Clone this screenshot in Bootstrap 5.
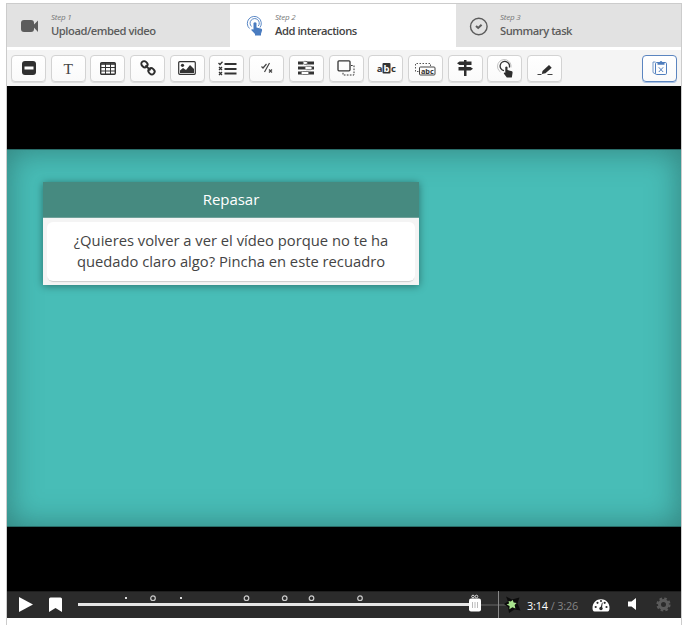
<!DOCTYPE html>
<html lang="en">
<head>
<meta charset="utf-8">
<title>Interactive video editor</title>
<link href="https://cdn.jsdelivr.net/npm/bootstrap@5.3.0/dist/css/bootstrap.min.css" rel="stylesheet">
<style>
body{font-family:"Open Sans",sans-serif;background:#fff;overflow:hidden}
svg{display:block;flex:none;overflow:visible}
.editor{width:676px;height:640px;margin:3px 0 0 6px;border:1px solid #ccc}
.steps{height:46px;background:#fff}
.step{height:43px;background:#e2e2e2;color:#5c5c5c;padding-left:12px;border:0}
.step.w1{width:223px}.step.w2{width:226px}.step.w3{width:225px}
.step.active{background:#fff;color:#444;padding-left:13px}
.step .pic{width:32px}
.step .num{font-size:8px;line-height:10px;font-style:italic;color:#777;letter-spacing:-.2px}
.step .title{font-size:11.2px;line-height:16px;font-weight:600;letter-spacing:-.46px;margin-top:1px;white-space:nowrap}
.tools{height:36px;background:#f4f4f4;padding:0 4px;gap:4.7px}
.tools .btn{width:35px;height:27px;padding:0;border:1px solid #d3d3d3;border-radius:4px;background:linear-gradient(#fff,#fafafa);box-shadow:0 1px 0 #ddd}
.tools .btn.paste{border-color:#5b85c0;box-shadow:0 1px 0 #a9c0e0}
.video{height:505px;background:#000;padding:63px 0 64px}
.scene{height:378px;background:#48bdb7;box-shadow:inset 0 0 30px 2px rgba(35,85,82,.55),inset 0 1px 0 #2c7672,inset 0 -1px 0 #2c7672;padding:33px 0 0 36px}
.task{width:376px;height:103px;background:#f4f4f4;box-shadow:0 1px 8px rgba(0,0,0,.4)}
.task h2{height:36px;line-height:35px;font-size:15px;font-weight:400;color:#fff;background:#468a80;border-bottom:1px solid #6fa19a;margin:0;letter-spacing:-.05px}
.task p{height:59px;margin:4px 4px 0;padding-top:8px;background:#fff;border-radius:6px;box-shadow:0 2px 1px -1px #ccc;font-size:14.75px;line-height:21px;color:#444}
.controls{height:27px;background:#2b2b2b;border-top:1px solid #1e1e1e;color:#fff}
.play{margin-left:12px}
.bookmark{margin-left:16px}
.track{width:434px;height:26px;margin-left:16px}
.clock{width:52px;margin-left:15px;font-size:10.9px;line-height:25px;white-space:nowrap;letter-spacing:-.15px}
.clock span{color:#858585}
.speed{margin-left:13px}
.volume{margin-left:18px}
.gear{margin-left:19px}
</style>
<script src="https://cdn.jsdelivr.net/npm/bootstrap@5.3.0/dist/js/bootstrap.bundle.min.js"></script>
</head>
<body>
<main class="editor">
<nav class="steps d-flex">
 <div class="step w1 d-flex align-items-center">
  <div class="pic"><svg width="22" height="14"><rect x="2" y="1" width="13" height="12" rx="3" fill="#5c5c5c"/><path d="M13.500 7l5.500-5.500v11.500z" fill="#5c5c5c"/></svg></div>
  <div><div class="num">Step 1</div><div class="title">Upload/embed video</div></div>
 </div>
 <div class="step active w2 d-flex align-items-center">
  <div class="pic"><svg width="24" height="22" viewBox="0 .5 24 22" fill="none" stroke="#4a7cc0"><path d="M6.500 14A7 7 0 1 1 17 13" stroke-width=".9"/><path d="M8.500 12A4.600 4.600 0 1 1 15.300 11.500" stroke-width=".9"/><path d="M10.500 8.500q1.500-1.400 3 0v4.500l5 1.200q.8.500.5 2l-1 3V21h-6v-1.500l-3.800-4q0-1.400 2.300-.5z" fill="#4a7cc0" stroke="none"/></svg></div>
  <div><div class="num">Step 2</div><div class="title">Add interactions</div></div>
 </div>
 <div class="step w3 d-flex align-items-center">
  <div class="pic"><svg width="22" height="20" fill="none" stroke="#5c5c5c"><circle cx="10.800" cy="10.500" r="8.300" stroke-width="1.400"/><path d="M8 10l2.200 2 3.400-3.300" stroke-width="2"/></svg></div>
  <div><div class="num">Step 3</div><div class="title">Summary task</div></div>
 </div>
</nav>
<div class="tools d-flex align-items-center">
 <button class="btn d-flex align-items-center justify-content-center" aria-label="Statements"><svg width="16" height="14"><rect x="1" width="14" height="14" rx="3" fill="#303030"/><rect x="3.500" y="5.500" width="9" height="3" fill="#fff"/></svg></button>
 <button class="btn d-flex align-items-center justify-content-center" aria-label="Text"><svg width="16" height="16"><text x="8.200" y="13.500" text-anchor="middle" font-family="Liberation Serif,serif" font-size="15.500" fill="#444">T</text></svg></button>
 <button class="btn d-flex align-items-center justify-content-center" aria-label="Table"><svg width="16" height="13" fill="none" stroke="#333"><rect x=".7" y=".7" width="14.600" height="11.600" rx="1" stroke-width="1.400"/><path d="M1 2h14" stroke-width="1.600"/><path d="M1 5.500h14M1 9h14M5.500 1v11M10.500 1v11"/></svg></button>
 <button class="btn d-flex align-items-center justify-content-center" aria-label="Link"><svg width="16" height="16" fill="none" stroke="#2e2e2e" stroke-width="1.900"><rect x="1.200" y="1.500" width="6.500" height="5.500" rx="2.700" transform="rotate(45 4.500 4.200)"/><rect x="8.300" y="8.500" width="6.500" height="5.500" rx="2.700" transform="rotate(45 11.500 11.200)"/><path d="M5.500 5.300l5 5"/></svg></button>
 <button class="btn d-flex align-items-center justify-content-center" aria-label="Image"><svg width="18" height="14"><rect x=".7" y=".7" width="16.600" height="12.600" rx="1" fill="#fff" stroke="#333" stroke-width="1.200"/><circle cx="4.500" cy="4.300" r="1.600" fill="#333"/><path d="M2 12V9.500L5 7l3 2 4-5 4 4v4z" fill="#333"/></svg></button>
 <button class="btn d-flex align-items-center justify-content-center" aria-label="Summary"><svg width="20" height="14" viewBox="-1 -.5 20 14" fill="none" stroke="#333"><path d="M6.500 2.500h12M6.500 7.500h12M6.500 12h12" stroke-width="2"/><path d="M.5 1.500L2 3 4.500.3M1 5.500l3 3m0-3l-3 3M1 10.500l3 3m0-3l-3 3" stroke-width="1.300"/></svg></button>
 <button class="btn d-flex align-items-center justify-content-center" aria-label="True or false"><svg width="14" height="12" fill="none" stroke="#444"><path d="M1.500 4.500l1.500 1.500 3.500-4M9.500 1l-5 9M9 7.500l3 3m0-3l-3 3" stroke-width="1.200"/></svg></button>
 <button class="btn d-flex align-items-center justify-content-center" aria-label="Drag text"><svg width="18" height="14"><path d="M1 2h5M9 2h8M1 7h7M13 7h4M1 12h4M10 12h7" stroke="#333" stroke-width="2.900"/><g fill="#fff" stroke="#555" stroke-width=".8"><rect x="6" y=".4" width="4.500" height="3" rx="1.500"/><rect x="8" y="5.300" width="7" height="3.400" rx="1.500"/><rect x="4" y="10.500" width="8" height="3" rx="1.500"/></g></svg></button>
 <button class="btn d-flex align-items-center justify-content-center" aria-label="Drag and drop"><svg width="18" height="16" fill="none" stroke="#333"><rect x="1" y=".8" width="12" height="10" rx="1" stroke-width="1.300"/><path d="M14 5.500h3v9.500H6v-3" stroke-dasharray="1.700 1.300"/></svg></button>
 <button class="btn d-flex align-items-center justify-content-center" aria-label="Mark words"><svg width="22" height="14" font-family="Open Sans,sans-serif" font-weight="700" font-size="9.500" fill="#333"><rect x="7.500" y="2" width="8" height="10.500" rx="1"/><text x="1.800" y="10.800">a</text><text x="8.500" y="10.800" fill="#fff">b</text><text x="16" y="10.800">c</text></svg></button>
 <button class="btn d-flex align-items-center justify-content-center" aria-label="Drag the words"><svg width="22" height="14" viewBox="-.5 -1 22 14" fill="none" stroke="#444"><path d="M4 9.500H1v-8h15v3" stroke-dasharray="1.500 1.500" stroke-width=".9"/><rect x="5" y="5" width="15.500" height="8" rx="1"/><text x="12.800" y="11.700" text-anchor="middle" font-family="Open Sans,sans-serif" font-weight="700" font-size="7.300" fill="#333" stroke="none">abc</text></svg></button>
 <button class="btn d-flex align-items-center justify-content-center" aria-label="Crossroads"><svg width="16" height="16" fill="#2e2e2e"><path d="M7 0h2.500v16H7zM2.500 1.500h12v3.600h-12L0 3.300zM1.500 7h12L16 8.800l-2.500 1.800h-12z"/></svg></button>
 <button class="btn d-flex align-items-center justify-content-center" aria-label="Hotspot"><svg width="18" height="18" fill="none" stroke="#333"><path d="M4.500 13A6.800 6.800 0 1 1 15 8.500" stroke-width=".6" stroke="#999"/><path d="M8 11.700A4.700 4.700 0 1 1 13.300 8.500" stroke-width="1.300"/><path d="M9.300 8q1.200-1 2.200 0v3l4.500 1.200q.8.500.5 2L15.800 18.500h-5l-3-4q0-1.500 1.500-.8z" fill="#2e2e2e" stroke="none"/></svg></button>
 <button class="btn d-flex align-items-center justify-content-center" aria-label="Free text question"><svg width="16" height="14" viewBox="-1.500 -1 16 14"><path d="M0 12.500h4M10 12.500h5" stroke="#444" stroke-width="1.200"/><path d="M5 9l6.500-6 2.700 2.700-6.200 5.500-3.700.8z" fill="#2e2e2e"/></svg></button>
 <button class="btn paste ms-auto d-flex align-items-center justify-content-center" aria-label="Paste"><svg width="16" height="17" viewBox="0 .5 16 17" fill="none" stroke="#4f7dbd"><path d="M3.500 2.500H1v10.500l2.500 1.500" stroke-width=".8"/><rect x="3.500" y="3" width="11" height="12" rx="1.200"/><path d="M5.500 5.200V2.800h2q1.500-2.600 3 0h2v2.400z" fill="#4f7dbd" stroke="none"/><path d="M6.800 7.800l4.400 4.700m0-4.700l-4.400 4.700"/></svg></button>
</div>
<section class="video">
 <div class="scene">
  <article class="task text-center"><h2>Repasar</h2><p>¿Quieres volver a ver el vídeo porque no te ha<br>quedado claro algo? Pincha en este recuadro</p></article>
 </div>
</section>
<div class="controls d-flex align-items-center">
 <svg class="play" width="14" height="16"><path d="M0 0v15l14-7.500z" fill="#fff"/></svg>
 <svg class="bookmark" width="13" height="15" viewBox="0 .5 13 15"><path d="M1.500 0h10q1.500 0 1.500 1.500V14.500l-6.500-4L0 14.500V1.500Q0 0 1.500 0z" fill="#fff"/></svg>
 <svg class="track" viewBox="0 0 434 26" fill="none">
  <path d="M396 13h35" stroke="#555" stroke-width="1.500"/><path d="M0 12.500h397" stroke="#e6e6e6" stroke-width="3"/>
  <path d="M420.500-1v27" stroke="#888"/>
  <path d="M47 6h2M102 6h2" stroke="#ddd" stroke-width="1.800"/>
  <g stroke="#ccc" stroke-width="1.200"><circle cx="75" cy="6.200" r="2.300"/><circle cx="168.500" cy="6.200" r="2.300"/><circle cx="206.700" cy="6.200" r="2.300"/><circle cx="233.500" cy="6.200" r="2.300"/><circle cx="282" cy="6.200" r="2.300"/></g>
  <circle cx="395" cy="4.500" r="1.300" stroke="#ddd"/><circle cx="398.500" cy="4.500" r="1.300" stroke="#ddd"/>
  <rect x="391" y="6.500" width="12" height="13" rx="2" fill="#fff"/><path d="M394.500 10v6M397 10v6M399.500 10v6" stroke="#bbb"/>
  <path d="M428 4.500l6 3 7.500-2-2 6 3 7-6-1-5.500 3.500-1-6-4-3 4-2.500z" fill="#0c0c0c"/><path d="M430.500 9l2.300.5 2-1.500.8 2.500 3 .5-2 2 .8 3.500-3-1.200-3 2 .2-3.300-3-1.500 2.500-1z" fill="#a9e58e"/>
 </svg>
 <div class="clock">3:14 <span>/ 3:26</span></div>
 <svg class="speed" width="18" height="14"><path d="M1 12.500A8.500 8.500 0 1 1 17 12.500Q16.700 13.500 15.500 13.500h-13Q1.300 13.500 1 12.500z" fill="#fff"/><g fill="#2b2b2b"><circle cx="3.700" cy="9" r="1.100"/><circle cx="5.500" cy="4.800" r="1.100"/><circle cx="9" cy="3" r="1"/><circle cx="12.700" cy="4.800" r="1.100"/><circle cx="14.500" cy="9" r="1.100"/><circle cx="9" cy="10.500" r="1.700"/><path d="M8.500 10L10 4.500l.7.200-.8 5.500z"/></g></svg>
 <svg class="volume" width="9" height="14"><path d="M0 3.500h3.500L8 0v12L3.500 8.500H0z" fill="#fff"/></svg>
 <svg class="gear" width="15" height="16" viewBox="-7.500 -7.500 15 16" fill="none" stroke="#5b5b5b"><circle r="4" stroke-width="3"/><circle r="6" stroke-width="2.200" stroke-dasharray="2.600 2.112"/></svg>
</div>
</main>
</body>
</html>
